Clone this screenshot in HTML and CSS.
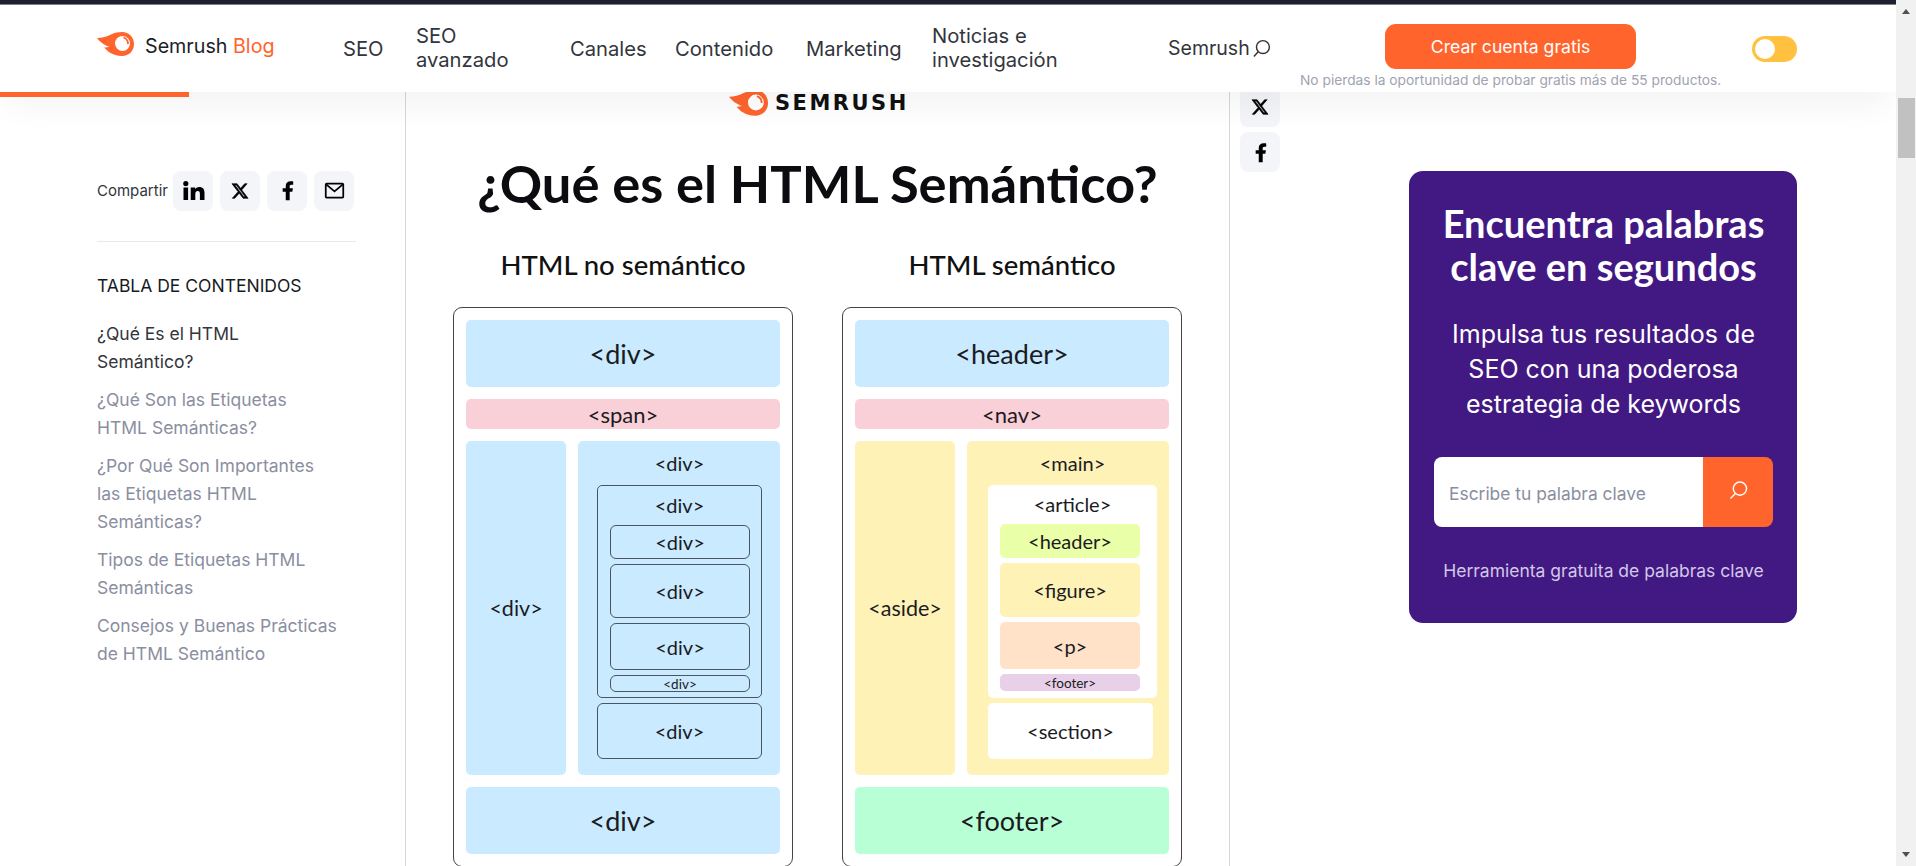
FILE: index.html
```html
<!DOCTYPE html>
<html lang="es">

<head>
    <meta charset="UTF-8">
    <meta name="viewport" content="width=device-width, initial-scale=1.0">
    <title>¿Qué es el HTML Semántico?</title>
    <link rel="stylesheet" href="styles.css">
</head>

<body>
    <div class="window">
        <div class="page">
            <div class="top-line"></div>
            <header class="site-header">
                <a class="brand">
                    <svg class="flame" viewBox="0 0 37 24">
                        <path fill="#ff642d" d="M0 6C5 6 10 4.500 14 2.500C18 .7 21 0 25 0C32 0 37 5 37 12C37 19 32 24 25 24C20 24 16 22.500 13.500 21C11.500 20.600 10 18 7 15.500C9 15.500 11 15.300 12.500 14.800C8 13.500 3 10 0 6Z" />
                        <circle fill="#fff" cx="25.500" cy="11.500" r="7.500" />
                        <path fill="none" stroke="#ff642d" stroke-width="1.800" d="M26.500 5.500C29.500 6.500 31 9 31 12" />
                    </svg>
                    <span>Semrush <b>Blog</b></span>
                </a>
                <nav class="main-nav">
                    <a class="nav-seo">SEO</a>
                    <a class="nav-adv">SEO<br>avanzado</a>
                    <a class="nav-can">Canales</a>
                    <a class="nav-con">Contenido</a>
                    <a class="nav-mar">Marketing</a>
                    <a class="nav-not">Noticias e<br>investigación</a>
                </nav>
                <a class="header-search">Semrush
                    <svg viewBox="0 0 20 20" fill="none" stroke="#333" stroke-width="1.500">
                        <circle cx="11.500" cy="8.500" r="6.800" />
                        <path d="M6.500 13.500L2 18.500" />
                    </svg>
                </a>
                <div class="cta">
                    <a class="cta-btn">Crear cuenta gratis</a>
                    <p>No pierdas la oportunidad de probar gratis más de 55 productos.</p>
                </div>
                <div class="toggle"><span></span></div>
                <div class="progress"></div>
            </header>

            <div class="columns">
                <aside class="sidebar">
                    <div class="share">
                        <span>Compartir</span>
                        <a class="icon-btn">
                            <svg class="in-icon" viewBox="0 0 24 24"><path d="M2.500 8.500h4.600V21H2.500zM4.800 2a2.600 2.600 0 1 1 0 5.200a2.600 2.600 0 0 1 0-5.200zM9.700 8.500h4.400v1.800c.7-1.200 2.200-2.200 4.100-2.200c3.800 0 5.300 2.300 5.300 6V21h-4.600v-6.100c0-1.800-.5-2.900-2-2.900c-1.700 0-2.600 1.200-2.600 3V21H9.700z" /></svg>
                        </a>
                        <a class="icon-btn">
                            <svg class="x-icon" viewBox="0 0 24 24"><path stroke="#000" stroke-width=".8" d="M18.244 2.250h3.308l-7.227 8.260 8.502 11.240H16.170l-5.214-6.817L4.990 21.750H1.680l7.730-8.835L1.254 2.250H8.080l4.713 6.231zm-1.161 17.520h1.833L7.084 4.126H5.117z" /></svg>
                        </a>
                        <a class="icon-btn">
                            <svg viewBox="0 0 24 24"><path d="M14.500 13.500h3l.7-4h-3.700v-2c0-1.030.3-2 2-2h2V1.700C18.100 1.600 16.800 1.500 15.500 1.500c-3.100 0-5.500 1.800-5.500 5.200v2.800H6.500v4H10V23h4.500z" /></svg>
                        </a>
                        <a class="icon-btn">
                            <svg viewBox="0 0 24 24" fill="none" stroke="#000" stroke-width="2"><rect x="2" y="4" width="20" height="16" rx="1" /><path d="M2.500 5l9.500 8l9.500-8" /></svg>
                        </a>
                    </div>
                    <h2 class="toc-title">Tabla de contenidos</h2>
                    <ul class="toc">
                        <li class="active">¿Qué Es el HTML<br>Semántico?</li>
                        <li>¿Qué Son las Etiquetas<br>HTML Semánticas?</li>
                        <li>¿Por Qué Son Importantes<br>las Etiquetas HTML<br>Semánticas?</li>
                        <li>Tipos de Etiquetas HTML<br>Semánticas</li>
                        <li>Consejos y Buenas Prácticas<br>de HTML Semántico</li>
                    </ul>
                </aside>

                <main class="article">
                    <div class="figure-logo">
                        <svg class="flame" viewBox="0 0 37 24">
                            <path fill="#ff642d" d="M0 6C5 6 10 4.500 14 2.500C18 .7 21 0 25 0C32 0 37 5 37 12C37 19 32 24 25 24C20 24 16 22.500 13.500 21C11.500 20.600 10 18 7 15.500C9 15.500 11 15.300 12.500 14.800C8 13.500 3 10 0 6Z" />
                            <circle fill="#fff" cx="25.500" cy="11.500" r="7.500" />
                            <path fill="none" stroke="#ff642d" stroke-width="1.800" d="M26.500 5.500C29.500 6.500 31 9 31 12" />
                        </svg>
                        <span>SEMRUSH</span>
                    </div>
                    <h1>¿Qué es el HTML Semántico?</h1>
                    <div class="compare">
                        <section class="layout-col">
                            <h3>HTML no semántico</h3>
                            <div class="frame">
                                <div class="block h-top blue big">&lt;div&gt;</div>
                                <div class="block h-bar pink">&lt;span&gt;</div>
                                <div class="mid">
                                    <div class="block side blue">&lt;div&gt;</div>
                                    <div class="block wide blue">
                                        <div class="label">&lt;div&gt;</div>
                                        <div class="inner outlined">
                                            <div class="label-sub">&lt;div&gt;</div>
                                            <div class="block b1 outlined">&lt;div&gt;</div>
                                            <div class="block b2 outlined">&lt;div&gt;</div>
                                            <div class="block b3 outlined">&lt;div&gt;</div>
                                            <div class="block b4 outlined tiny">&lt;div&gt;</div>
                                        </div>
                                        <div class="block last outlined">&lt;div&gt;</div>
                                    </div>
                                </div>
                                <div class="block h-top blue big">&lt;div&gt;</div>
                            </div>
                        </section>
                        <section class="layout-col">
                            <h3>HTML semántico</h3>
                            <div class="frame semantic">
                                <div class="block h-top blue big">&lt;header&gt;</div>
                                <div class="block h-bar pink">&lt;nav&gt;</div>
                                <div class="mid">
                                    <div class="block side yellow">&lt;aside&gt;</div>
                                    <div class="block wide yellow">
                                        <div class="label">&lt;main&gt;</div>
                                        <div class="inner white">
                                            <div class="label-sub">&lt;article&gt;</div>
                                            <div class="block b1 lime">&lt;header&gt;</div>
                                            <div class="block b2 yellow">&lt;figure&gt;</div>
                                            <div class="block b3 peach">&lt;p&gt;</div>
                                            <div class="block b4 lilac tiny">&lt;footer&gt;</div>
                                        </div>
                                        <div class="block last white">&lt;section&gt;</div>
                                    </div>
                                </div>
                                <div class="block h-top mint big">&lt;footer&gt;</div>
                            </div>
                        </section>
                    </div>
                </main>

                <div class="right-col">
                    <div class="float-share">
                        <a class="icon-btn">
                            <svg class="x-icon" viewBox="0 0 24 24"><path stroke="#000" stroke-width=".8" d="M18.244 2.250h3.308l-7.227 8.260 8.502 11.240H16.170l-5.214-6.817L4.990 21.750H1.680l7.730-8.835L1.254 2.250H8.080l4.713 6.231zm-1.161 17.520h1.833L7.084 4.126H5.117z" /></svg>
                        </a>
                        <a class="icon-btn">
                            <svg viewBox="0 0 24 24"><path d="M14.500 13.500h3l.7-4h-3.700v-2c0-1.030.3-2 2-2h2V1.700C18.100 1.600 16.800 1.500 15.500 1.500c-3.100 0-5.500 1.800-5.500 5.200v2.800H6.500v4H10V23h4.500z" /></svg>
                        </a>
                    </div>
                    <div class="promo">
                        <h2>Encuentra palabras clave en segundos</h2>
                        <p>Impulsa tus resultados de SEO con una poderosa estrategia de keywords</p>
                        <form class="kw-form">
                            <input type="text" placeholder="Escribe tu palabra clave">
                            <button type="button">
                                <svg viewBox="0 0 20 20" fill="none" stroke="#fff" stroke-width="1.500">
                                    <circle cx="11.500" cy="8" r="7" />
                                    <path d="M6.500 13.500L1.500 18.500" />
                                </svg>
                            </button>
                        </form>
                        <a class="promo-link">Herramienta gratuita de palabras clave</a>
                    </div>
                </div>
            </div>
        </div>

        <div class="scrollbar">
            <span class="arrow-up"></span>
            <span class="thumb"></span>
            <span class="arrow-down"></span>
        </div>
    </div>
</body>

</html>
```

FILE: styles.css
```css
* {
    box-sizing: border-box;
}

html,
body {
    margin: 0;
    height: 866px;
    overflow: hidden;
    background: #fff;
    font-family: Inter, "Liberation Sans", sans-serif;
    color: #171a22;
}

.window {
    display: flex;
    height: 866px;
}

.page {
    flex: 1;
    min-width: 0;
    height: 866px;
    overflow: hidden;
}

.top-line {
    height: 5px;
    background: #1c2030;
    border-bottom: 1px solid #7d8088;
}

/* header */
.site-header {
    position: relative;
    z-index: 5;
    display: flex;
    align-items: center;
    height: 87px;
    padding-left: 97px;
    background: #fff;
    box-shadow: 0 22px 30px -6px rgba(0, 0, 0, 0.045);
}

.flame {
    display: block;
    width: 37px;
    height: 24px;
    flex: none;
}

.brand {
    display: flex;
    align-items: center;
    gap: 11px;
    width: 246px;
    margin-top: -9px;
    font-size: 19.700px;
    color: #1c1e26;
    white-space: nowrap;
}

.brand span {
    margin-top: 3px;
}

.brand b {
    font-weight: 400;
    color: #ff642d;
}

.main-nav {
    display: flex;
    align-items: center;
    font-size: 20.200px;
    line-height: 24px;
    color: #33353d;
    white-space: nowrap;
}

.main-nav a {
    display: block;
}

.nav-seo {
    width: 73px;
    margin-top: 1px;
}

.nav-adv {
    width: 154px;
    margin-top: -1px;
}

.nav-can {
    width: 105px;
    margin-top: 1px;
}

.nav-con {
    width: 131px;
    margin-top: 1px;
}

.nav-mar {
    width: 126px;
    margin-top: 1px;
}

.nav-not {
    width: 236px;
    margin-top: -1px;
}

.header-search {
    display: flex;
    align-items: center;
    gap: 2px;
    width: 217px;
    margin-top: -1px;
    font-size: 19.500px;
    color: #33353d;
}

.header-search svg {
    width: 19px;
    height: 19px;
}

.cta {
    width: 421px;
    margin-left: -85px;
    margin-top: 17px;
    text-align: center;
}

.cta-btn {
    display: block;
    width: 251px;
    height: 45px;
    margin: 0 auto 1px;
    line-height: 45px;
    border-radius: 11px;
    background: #ff642d;
    color: #fff;
    font-size: 17.600px;
}

.cta p {
    margin: 0;
    font-size: 13.750px;
    line-height: 20px;
    color: #a0a3b0;
    white-space: nowrap;
}

.toggle {
    width: 45px;
    height: 26px;
    margin-left: 31px;
    margin-top: 1px;
    padding: 3px;
    border-radius: 13px;
    background: #ffc13f;
}

.toggle span {
    display: block;
    width: 20px;
    height: 20px;
    border-radius: 50%;
    background: #fff;
}

.progress {
    position: absolute;
    left: 0;
    bottom: -5px;
    width: 189px;
    height: 5px;
    background: #ff642d;
}

/* three columns */
.columns {
    display: flex;
    height: 774px;
}

.sidebar {
    flex: none;
    width: 405px;
    padding: 79px 49px 0 97px;
}

.share {
    display: flex;
    align-items: center;
    gap: 7px;
    height: 71px;
    padding-bottom: 31px;
    border-bottom: 1px solid #e8e9ee;
    font-size: 15px;
    color: #33353d;
}

.share span {
    width: 69px;
}

.icon-btn {
    display: flex;
    align-items: center;
    justify-content: center;
    width: 40px;
    height: 40px;
    border-radius: 8px;
    background: #f4f5f9;
}

.icon-btn svg {
    width: 21px;
    height: 21px;
}

.icon-btn .in-icon {
    width: 24px;
    height: 24px;
}

.icon-btn .x-icon {
    width: 18px;
    height: 18px;
}

.toc-title {
    margin: 32px 0 22px;
    font-size: 17.500px;
    line-height: 24px;
    font-weight: 400;
    text-transform: uppercase;
    white-space: nowrap;
}

.toc {
    margin: 0;
    padding: 0;
    list-style: none;
    font-size: 17.500px;
    line-height: 28px;
    color: #8a8ea0;
    white-space: nowrap;
}

.toc li {
    margin-bottom: 10px;
}

.toc .active {
    color: #33353d;
}

.article {
    flex: none;
    width: 825px;
    height: 774px;
    border-left: 1px solid #d5d6de;
    border-right: 1px solid #d5d6de;
    background: #fff;
    text-align: center;
}

.figure-logo {
    display: flex;
    align-items: center;
    gap: 7px;
    height: 30px;
    margin: -4px 0 0 323px;
}

.figure-logo .flame {
    width: 39px;
    height: 26px;
}

.figure-logo span {
    font-family: "DejaVu Sans", sans-serif;
    font-size: 21px;
    font-weight: 700;
    color: #111;
    letter-spacing: 2.500px;
}

.article h1 {
    margin: 32px 0 0;
    font-family: Lato, sans-serif;
    font-size: 52.500px;
    line-height: 66px;
    font-weight: 700;
    color: #0c0c10;
}

.compare {
    display: flex;
    gap: 49px;
    margin: 32px 0 0 47px;
}

.layout-col {
    width: 340px;
}

.layout-col h3 {
    margin: 0 0 25px;
    font-family: Lato, sans-serif;
    font-size: 27.500px;
    line-height: 34px;
    font-weight: 500;
    color: #111;
}

/* the two page sketches */
.frame {
    display: flex;
    flex-direction: column;
    gap: 12px;
    width: 340px;
    height: 560px;
    padding: 12px;
    border: 1px solid #444;
    border-radius: 9px;
    font-family: Lato, sans-serif;
    font-size: 20px;
    color: #1b1b1f;
}

.block {
    display: flex;
    align-items: center;
    justify-content: center;
    flex: none;
    border-radius: 5px;
    font-size: 20px;
}

.blue {
    background: #c9eaff;
}

.pink {
    background: #fad0d8;
}

.yellow {
    background: #fef2b6;
}

.white {
    background: #fff;
}

.lime {
    background: #e9ffa8;
}

.peach {
    background: #ffe2c8;
}

.lilac {
    background: #e7d0e8;
}

.mint {
    background: #b9ffd6;
}

.outlined {
    border: 1px solid #4a5560;
    border-radius: 6px;
}

.big {
    font-size: 27px;
}

.tiny {
    font-size: 13.500px;
}

.h-top {
    height: 67px;
}

.h-bar {
    height: 30px;
    font-size: 22px;
}

.mid {
    display: flex;
    gap: 12px;
    height: 334px;
}

.side {
    width: 100px;
    font-size: 21.500px;
}

.wide {
    display: block;
    width: 202px;
    padding: 0 18px 0 19px;
}

.semantic .wide {
    padding: 0 12px 0 21px;
}

.label {
    height: 44px;
    line-height: 44px;
    text-align: center;
}

.label-sub {
    height: 34px;
    padding-top: 5px;
    line-height: 28px;
    text-align: center;
}

.inner {
    display: flex;
    flex-direction: column;
    gap: 5px;
    height: 213px;
    padding: 0 12px;
    border-radius: 5px;
}

.inner .block {
    width: 140px;
}

.b1 {
    height: 34px;
}

.b2 {
    height: 54px;
}

.b3 {
    height: 47px;
}

.b4 {
    height: 17px;
}

.last {
    height: 56px;
    margin-top: 5px;
    width: 165px;
}

/* right column */
.right-col {
    flex: 1;
    display: flex;
    align-items: flex-start;
    padding-left: 10px;
    background: #fff;
}

.float-share {
    display: flex;
    flex-direction: column;
    gap: 5px;
    width: 40px;
    margin-top: -5px;
}

.promo {
    width: 388px;
    height: 452px;
    margin: 79px 0 0 129px;
    padding: 31px 24px 0 25px;
    border-radius: 14px;
    background: #421983;
    color: #fff;
    text-align: center;
}

.promo h2 {
    margin: 0 0 29px;
    font-family: Lato, sans-serif;
    font-size: 38px;
    line-height: 43px;
    font-weight: 700;
}

.promo p {
    margin: 0 -5px 35px;
    font-size: 25px;
    line-height: 35px;
}

.kw-form {
    display: flex;
    height: 70px;
}

.kw-form input {
    flex: 1;
    min-width: 0;
    height: 70px;
    padding: 2px 15px 0;
    border: 0;
    border-radius: 8px 0 0 8px;
    background: #fff;
    font-family: Inter, sans-serif;
    font-size: 17.400px;
}

.kw-form input::placeholder {
    color: #8a8ea0;
    opacity: 1;
}

.kw-form button {
    width: 70px;
    height: 70px;
    padding: 0 0 4px;
    border: 0;
    border-radius: 0 8px 8px 0;
    background: #ff642d;
}

.kw-form svg {
    display: block;
    width: 19px;
    height: 19px;
    margin: 0 auto;
}

.promo-link {
    display: block;
    margin: 33px -10px 0;
    font-size: 17.500px;
    line-height: 22px;
    color: #d3c8e8;
    white-space: nowrap;
}

/* fake browser scrollbar */
.scrollbar {
    position: relative;
    flex: none;
    width: 20px;
    height: 866px;
    background: #f1f1f1;
}

.arrow-up,
.arrow-down {
    position: absolute;
    left: 6px;
    width: 0;
    height: 0;
    border-left: 4px solid transparent;
    border-right: 4px solid transparent;
}

.arrow-up {
    top: 9px;
    border-bottom: 5px solid #505050;
}

.arrow-down {
    bottom: 9px;
    border-top: 5px solid #505050;
}

.thumb {
    position: absolute;
    top: 98px;
    left: 2px;
    width: 17px;
    height: 60px;
    background: #c1c1c1;
}
```
